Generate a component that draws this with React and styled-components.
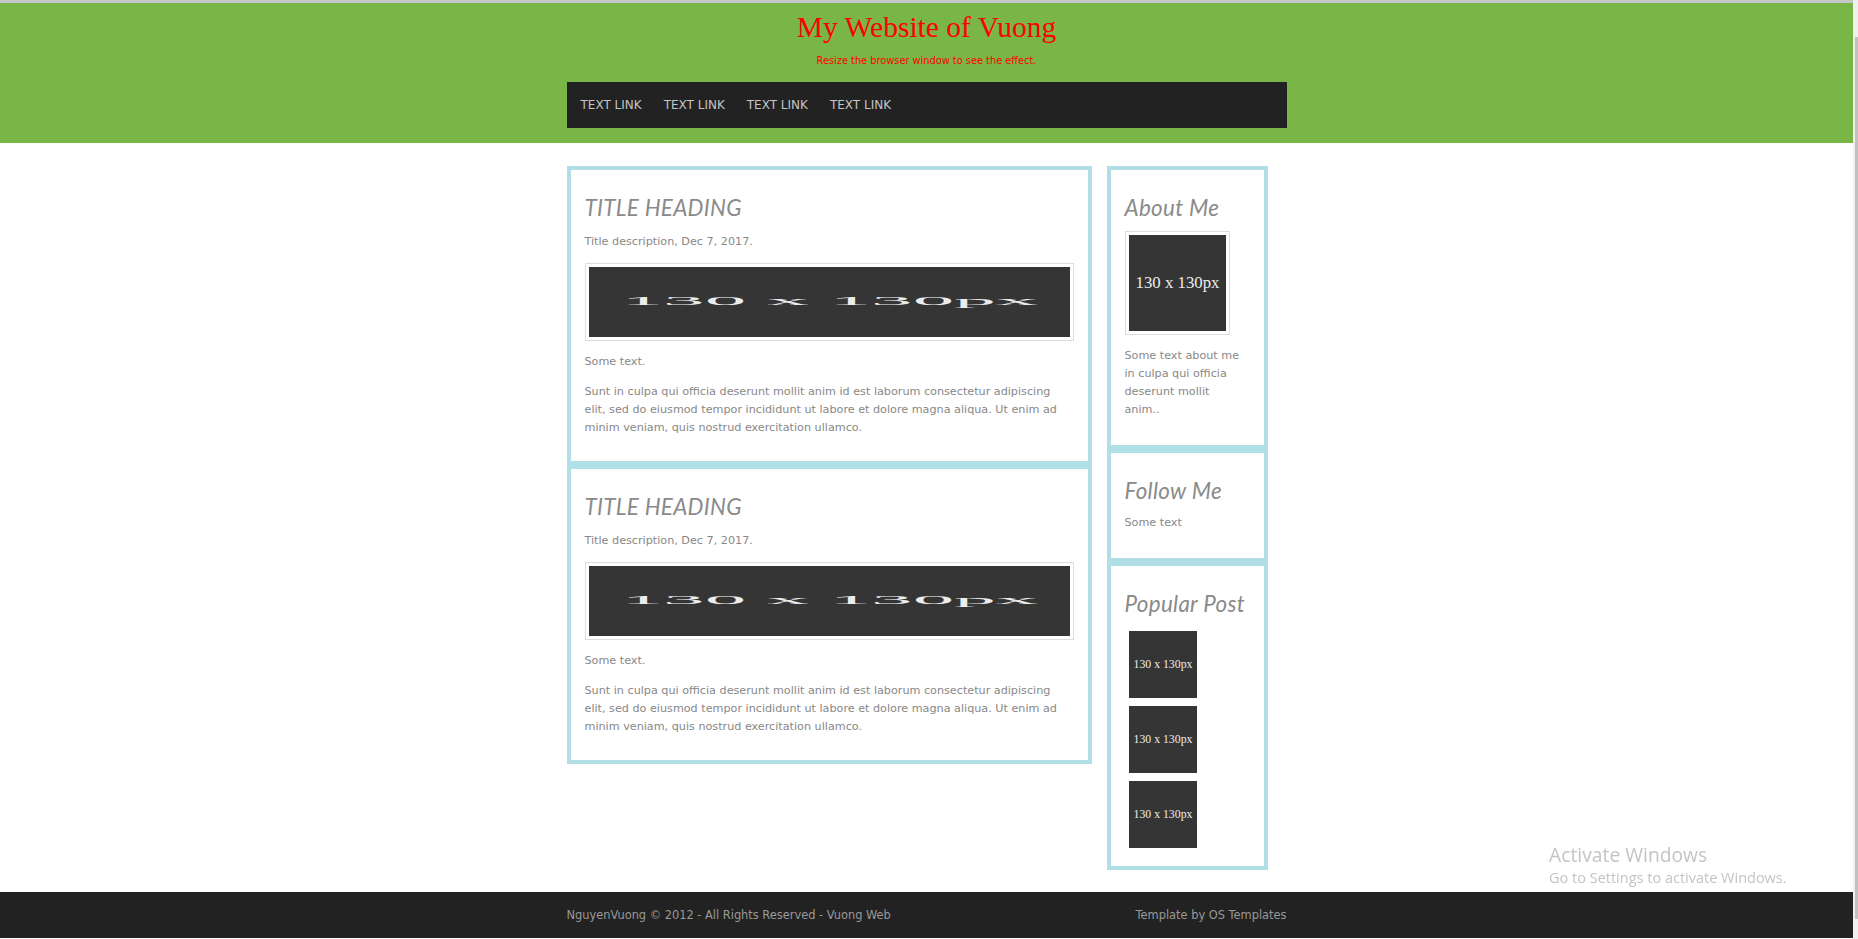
import styled, { createGlobalStyle } from "styled-components";

// Base page styles
const GlobalStyle = createGlobalStyle`
  html, body {
    margin: 0;
    padding: 0;
    background: #fff;
    overflow: hidden;
  }
  body {
    font-family: "DejaVu Sans", Verdana, sans-serif;
    font-size: 11.2px;
    color: #888;
  }
`;

const Page = styled.div`
  margin-right: 5px;
  border-top: 3px solid #c6c6c6;
`;

// Green header with title, tagline and nav bar
const Header = styled.header`
  background: #7ab547;
  padding: 7px 0 15px;
  text-align: center;
`;

const SiteTitle = styled.h1`
  margin: 0;
  font-family: "Liberation Serif", "Times New Roman", serif;
  font-weight: normal;
  font-size: 29.5px;
  line-height: 34px;
  color: #f00;
`;

const Tagline = styled.p`
  margin: 11px 0 16px;
  font-size: 9.8px;
  line-height: 11px;
  color: #f00;
`;

const Nav = styled.nav`
  width: 720px;
  height: 46px;
  margin: 0 auto;
  padding-left: 3px;
  box-sizing: border-box;
  background: #222;
  display: flex;
  align-items: center;
`;

const NavLink = styled.a`
  padding: 0 11px;
  color: #c4c4c4;
  font-size: 12px;
  text-decoration: none;
  text-transform: uppercase;
`;

// Two column content
const Main = styled.main`
  width: 720px;
  margin: 0 auto;
  padding: 23px 0 22px;
  display: flex;
  align-items: flex-start;
`;

const LeftColumn = styled.div`
  width: 525px;
  display: flex;
  flex-direction: column;
`;

const RightColumn = styled.aside`
  width: 161px;
  margin-left: 15px;
  display: flex;
  flex-direction: column;
`;

const Card = styled.section`
  border: 4px solid #b0e0e6;
  background: #fff;
  padding: 14px ${(p) => (p.$side ? "18px" : "14px")} ${(p) => (p.$side ? "14px" : "12px")} 14px;
`;

const CardTitle = styled.h2`
  margin: 11px 0 ${(p) => (p.$tight ? "10px" : "12px")};
  font-family: Lato, "Open Sans", sans-serif;
  font-style: italic;
  font-weight: normal;
  font-size: 22.4px;
  letter-spacing: 0.3px;
  line-height: 26px;
  color: #8a8a8a;
`;

const Text = styled.p`
  margin: 0 0 12px;
  line-height: 18px;
`;

const Frame = styled.div`
  width: ${(p) => (p.$wide ? "auto" : "fit-content")};
  padding: 3px;
  border: 1px solid ${(p) => (p.$bare ? "transparent" : "#ddd")};
  margin-bottom: ${(p) => (p.$bare ? "0" : "12px")};
`;

const PlaceholderSvg = styled.svg`
  display: block;
  width: ${(p) => p.$w};
  height: ${(p) => p.$h};
`;

// Footer
const Footer = styled.footer`
  background: #222;
  height: 46px;
`;

const FooterInner = styled.div`
  width: 720px;
  height: 100%;
  margin: 0 auto;
  display: flex;
  justify-content: space-between;
  align-items: center;
  font-size: 11.4px;
  color: #999;
`;

// Overlays: OS watermark and the browser scrollbar
const Watermark = styled.div`
  position: fixed;
  left: 1549px;
  top: 843px;
  font-family: "Open Sans", "Noto Sans", sans-serif;
  color: #c4c4c4;
  pointer-events: none;
`;

const WatermarkTitle = styled.div`
  font-size: 19.3px;
  line-height: 24px;
`;

const WatermarkSub = styled.div`
  font-size: 14.5px;
  line-height: 21px;
`;

const ScrollTrack = styled.div`
  position: fixed;
  top: 0;
  right: 0;
  width: 5px;
  height: 100%;
  background: #f0f0f0;
`;

const ScrollThumb = styled.div`
  position: absolute;
  top: 37px;
  right: 0;
  width: 3px;
  bottom: 20px;
  background: #c1c1c1;
`;

function Placeholder({ w, h }) {
  return (
    <PlaceholderSvg viewBox="0 0 130 130" preserveAspectRatio="none" $w={w} $h={h}>
      <rect width="130" height="130" fill="#353535" />
      <text
        x="65"
        y="66"
        textAnchor="middle"
        dominantBaseline="middle"
        fontFamily="'Liberation Serif', serif"
        fontSize="22.5"
        fill="#ececec"
      >
        130 x 130px
      </text>
    </PlaceholderSvg>
  );
}

const posts = [1, 2];
const popular = [1, 2, 3];

export default function App() {
  return (
    <Page>
      <GlobalStyle />
      <Header>
        <SiteTitle>My Website of Vuong</SiteTitle>
        <Tagline>Resize the browser window to see the effect.</Tagline>
        <Nav>
          <NavLink href="#">Text Link</NavLink>
          <NavLink href="#">Text Link</NavLink>
          <NavLink href="#">Text Link</NavLink>
          <NavLink href="#">Text Link</NavLink>
        </Nav>
      </Header>

      <Main>
        <LeftColumn>
          {posts.map((id) => (
            <Card key={id}>
              <CardTitle>TITLE HEADING</CardTitle>
              <Text>Title description, Dec 7, 2017.</Text>
              <Frame $wide>
                <Placeholder w="100%" h="70px" />
              </Frame>
              <Text>Some text.</Text>
              <Text>
                Sunt in culpa qui officia deserunt mollit anim id est laborum
                consectetur adipiscing elit, sed do eiusmod tempor incididunt ut
                labore et dolore magna aliqua. Ut enim ad minim veniam, quis
                nostrud exercitation ullamco.
              </Text>
            </Card>
          ))}
        </LeftColumn>

        <RightColumn>
          <Card $side>
            <CardTitle $tight>About Me</CardTitle>
            <Frame>
              <Placeholder w="97px" h="96px" />
            </Frame>
            <Text>Some text about me in culpa qui officia deserunt mollit anim..</Text>
          </Card>
          <Card $side>
            <CardTitle $tight>Follow Me</CardTitle>
            <Text>Some text</Text>
          </Card>
          <Card $side>
            <CardTitle $tight>Popular Post</CardTitle>
            {popular.map((id) => (
              <Frame key={id} $bare>
                <Placeholder w="68px" h="67px" />
              </Frame>
            ))}
          </Card>
        </RightColumn>
      </Main>

      <Footer>
        <FooterInner>
          <span>NguyenVuong © 2012 - All Rights Reserved - Vuong Web</span>
          <span>Template by OS Templates</span>
        </FooterInner>
      </Footer>

      <Watermark>
        <WatermarkTitle>Activate Windows</WatermarkTitle>
        <WatermarkSub>Go to Settings to activate Windows.</WatermarkSub>
      </Watermark>
      <ScrollTrack>
        <ScrollThumb />
      </ScrollTrack>
    </Page>
  );
}
